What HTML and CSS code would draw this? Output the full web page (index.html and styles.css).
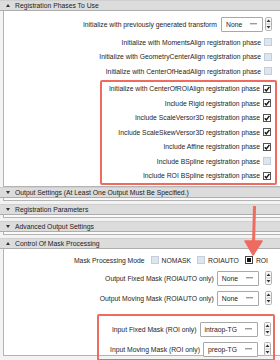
FILE: index.html
```html
<!DOCTYPE html>
<html>
<head>
<meta charset="utf-8">
<link rel="stylesheet" href="styles.css">
</head>
<body>
<div class="page">
  <div class="sec-head"><span class="tri up"></span>Registration Phases To Use</div>
  <div class="panel p1">
    <div class="row first">
      <span>Initialize with previously generated transform</span>
      <span class="combo w42"><span>None</span><span class="grip"></span></span>
      <span class="stepper s1"><svg width="7" height="14" viewBox="0 0 7 14"><rect x="0.5" y="0.5" width="6" height="13" rx="1" fill="#f6f6f6" stroke="#b4b4b4"/><path d="M1.5 5 L3.5 2.5 L5.5 5 Z" fill="#333"/><path d="M1.5 9 L3.5 11.5 L5.5 9 Z" fill="#333"/><line x1="1" y1="7" x2="6" y2="7" stroke="#ccc"/></svg></span>
    </div>
    <div class="row">Initialize with MomentsAlign registration phase<span class="cb"></span></div>
    <div class="row">Initialize with GeometryCenterAlign registration phase<span class="cb"></span></div>
    <div class="row">Initialize with CenterOfHeadAlign registration phase<span class="cb"></span></div>
    <div class="redbox rb1">
      <div class="row">Initialize with CenterOfROIAlign registration phase<span class="cb on"><svg width="8" height="8" viewBox="0 0 8 8"><rect x="0.5" y="0.5" width="7" height="7" fill="#fff" stroke="#555"/><path d="M1.8 4.3 L3.3 5.9 L6.4 1.9" fill="none" stroke="#111" stroke-width="1.4"/></svg></span></div>
      <div class="row">Include Rigid registration phase<span class="cb on"><svg width="8" height="8" viewBox="0 0 8 8"><rect x="0.5" y="0.5" width="7" height="7" fill="#fff" stroke="#555"/><path d="M1.8 4.3 L3.3 5.9 L6.4 1.9" fill="none" stroke="#111" stroke-width="1.4"/></svg></span></div>
      <div class="row">Include ScaleVersor3D registration phase<span class="cb on"><svg width="8" height="8" viewBox="0 0 8 8"><rect x="0.5" y="0.5" width="7" height="7" fill="#fff" stroke="#555"/><path d="M1.8 4.3 L3.3 5.9 L6.4 1.9" fill="none" stroke="#111" stroke-width="1.4"/></svg></span></div>
      <div class="row">Include ScaleSkewVersor3D registration phase<span class="cb on"><svg width="8" height="8" viewBox="0 0 8 8"><rect x="0.5" y="0.5" width="7" height="7" fill="#fff" stroke="#555"/><path d="M1.8 4.3 L3.3 5.9 L6.4 1.9" fill="none" stroke="#111" stroke-width="1.4"/></svg></span></div>
      <div class="row">Include Affine registration phase<span class="cb on"><svg width="8" height="8" viewBox="0 0 8 8"><rect x="0.5" y="0.5" width="7" height="7" fill="#fff" stroke="#555"/><path d="M1.8 4.3 L3.3 5.9 L6.4 1.9" fill="none" stroke="#111" stroke-width="1.4"/></svg></span></div>
      <div class="row">Include BSpline registration phase<span class="cb"></span></div>
      <div class="row">Include ROI BSpline registration phase<span class="cb on"><svg width="8" height="8" viewBox="0 0 8 8"><rect x="0.5" y="0.5" width="7" height="7" fill="#fff" stroke="#555"/><path d="M1.8 4.3 L3.3 5.9 L6.4 1.9" fill="none" stroke="#111" stroke-width="1.4"/></svg></span></div>
    </div>
  </div>

  <div class="sec-head"><span class="tri down"></span>Output Settings (At Least One Output Must Be Specified.)</div>
  <div class="collapsed"></div>
  <div class="sec-head"><span class="tri down"></span>Registration Parameters</div>
  <div class="collapsed"></div>
  <div class="sec-head"><span class="tri down"></span>Advanced Output Settings</div>
  <div class="collapsed"></div>
  <div class="sec-head"><span class="tri up"></span>Control Of Mask Processing</div>
  <div class="panel p2">
    <div class="row mode">
      <span class="lbl">Mask Processing Mode</span>
      <span class="opt"><span class="cb"></span>NOMASK</span>
      <span class="opt"><span class="cb"></span>ROIAUTO</span>
      <span class="opt"><span class="cb sel"></span>ROI</span>
    </div>
    <div class="row tall">
      <span>Output Fixed Mask (ROIAUTO only)</span>
      <span class="combo"><span>None</span><span class="grip"></span></span>
      <span class="stepper"><svg width="7" height="14" viewBox="0 0 7 14"><rect x="0.5" y="0.5" width="6" height="13" rx="1" fill="#f6f6f6" stroke="#b4b4b4"/><path d="M1.5 5 L3.5 2.5 L5.5 5 Z" fill="#333"/><path d="M1.5 9 L3.5 11.5 L5.5 9 Z" fill="#333"/><line x1="1" y1="7" x2="6" y2="7" stroke="#ccc"/></svg></span>
    </div>
    <div class="row tall">
      <span>Output Moving Mask (ROIAUTO only)</span>
      <span class="combo"><span>None</span><span class="grip"></span></span>
      <span class="stepper"><svg width="7" height="14" viewBox="0 0 7 14"><rect x="0.5" y="0.5" width="6" height="13" rx="1" fill="#f6f6f6" stroke="#b4b4b4"/><path d="M1.5 5 L3.5 2.5 L5.5 5 Z" fill="#333"/><path d="M1.5 9 L3.5 11.5 L5.5 9 Z" fill="#333"/><line x1="1" y1="7" x2="6" y2="7" stroke="#ccc"/></svg></span>
    </div>
    <div class="redbox rb2">
      <div class="row tall">
        <span>Input Fixed Mask (ROI only)</span>
        <span class="combo"><span>intraop-TG</span><span class="grip"></span></span>
        <span class="stepper"><svg width="7" height="14" viewBox="0 0 7 14"><rect x="0.5" y="0.5" width="6" height="13" rx="1" fill="#f6f6f6" stroke="#b4b4b4"/><path d="M1.5 5 L3.5 2.5 L5.5 5 Z" fill="#333"/><path d="M1.5 9 L3.5 11.5 L5.5 9 Z" fill="#333"/><line x1="1" y1="7" x2="6" y2="7" stroke="#ccc"/></svg></span>
      </div>
      <div class="row tall">
        <span>Input Moving Mask (ROI only)</span>
        <span class="combo"><span>preop-TG</span><span class="grip"></span></span>
        <span class="stepper"><svg width="7" height="14" viewBox="0 0 7 14"><rect x="0.5" y="0.5" width="6" height="13" rx="1" fill="#f6f6f6" stroke="#b4b4b4"/><path d="M1.5 5 L3.5 2.5 L5.5 5 Z" fill="#333"/><path d="M1.5 9 L3.5 11.5 L5.5 9 Z" fill="#333"/><line x1="1" y1="7" x2="6" y2="7" stroke="#ccc"/></svg></span>
      </div>
    </div>
  </div>

  <svg class="arrow" width="24" height="52" viewBox="0 0 24 52">
    <path d="M12.5 1 L11.5 38" stroke="#ef6a5f" stroke-width="3" stroke-linecap="round" fill="none"/>
    <path d="M3 35 L20 35 L11 49 Z" fill="#ef6a5f" stroke="#ef6a5f" stroke-width="1.5" stroke-linejoin="round"/>
  </svg>
</div>
</body>
</html>
```

FILE: styles.css
```css
* { box-sizing: border-box; }
html, body { margin: 0; padding: 0; }
body {
  width: 280px;
  height: 360px;
  overflow: hidden;
  background: #f3f3f3;
  font-family: "Liberation Sans", Arial, sans-serif;
  font-size: 6.8px;
  color: #1e1e1e;
}
.page { position: relative; width: 280px; height: 360px; overflow: hidden; }

.sec-head {
  height: 11px;
  display: flex;
  align-items: center;
  padding-left: 6px;
  background: #dcdcdc;
  border-top: 1px solid #cfcfcf;
  border-bottom: 1px solid #adadad;
  color: #222;
  white-space: nowrap;
}
.tri { width: 0; height: 0; margin-right: 5px; border-left: 2.5px solid transparent; border-right: 2.5px solid transparent; }
.tri.up { border-bottom: 3px solid #333; }
.tri.down { border-top: 3px solid #333; }

.collapsed {
  height: 3px;
  margin: 0 0 3px 3px;
  border-left: 1px solid #b4b4b4;
  border-bottom: 1px solid #b4b4b4;
  background: #fafafa;
}

.panel {
  margin-left: 3px;
  background: #fff;
  border-left: 1px solid #b4b4b4;
  border-bottom: 1px solid #b4b4b4;
}
.p1 { padding: 4px 0 1px 0; }
.p2 { padding: 3px 0 0 0; height: 107px; }

.row {
  height: 14.5px;
  display: flex;
  align-items: center;
  justify-content: flex-end;
  gap: 3px;
  padding-right: 8px;
  white-space: nowrap;
}
.row.first { height: 20px; gap: 4px; padding-bottom: 2px; }
.row.tall { height: 20px; gap: 3px; }

.cb {
  width: 8px;
  height: 8px;
  flex: none;
  background: #dde5ee;
  border: 1px solid #c4cdd8;
  display: inline-block;
}
.cb.on { background: none; border: none; }
.cb.on svg { display: block; }
.cb.sel {
  background: #fff;
  border: 1px solid #444;
  position: relative;
}
.cb.sel::after {
  content: "";
  position: absolute;
  left: 1px; top: 1px;
  width: 4px; height: 4px;
  background: #111;
}

.redbox {
  border: 2px solid #ef6a5f;
  border-radius: 2px;
}
.rb1 { margin: 1px 3px 0 96px; }
.rb1 .row { padding-right: 4px; }
.rb2 { margin: 6px 5px 0 93px; padding-top: 3px; }
.rb2 .row { padding-right: 2px; }

.combo {
  height: 15px;
  display: flex;
  align-items: center;
  gap: 8px;
  padding: 0 5px 0 4px;
  background: #fff;
  border: 1px solid #a8a8a8;
  border-radius: 1px;
  color: #1e1e1e;
}
.combo.w42 { width: 42px; justify-content: space-between; }
.grip {
  width: 7px;
  height: 2px;
  background: #9a9a9a;
  border-bottom: 1px solid #d8d8d8;
}
.stepper { display: flex; }
.stepper svg { display: block; }
.row.tall .stepper { margin-left: 3px; }
.s1 { margin-left: -2px; }

.row.mode { height: 16px; padding-right: 12px; gap: 4px; }
.opt { display: flex; align-items: center; gap: 3px; margin-left: 2px; }

.arrow { position: absolute; left: 242px; top: 206px; }
```
